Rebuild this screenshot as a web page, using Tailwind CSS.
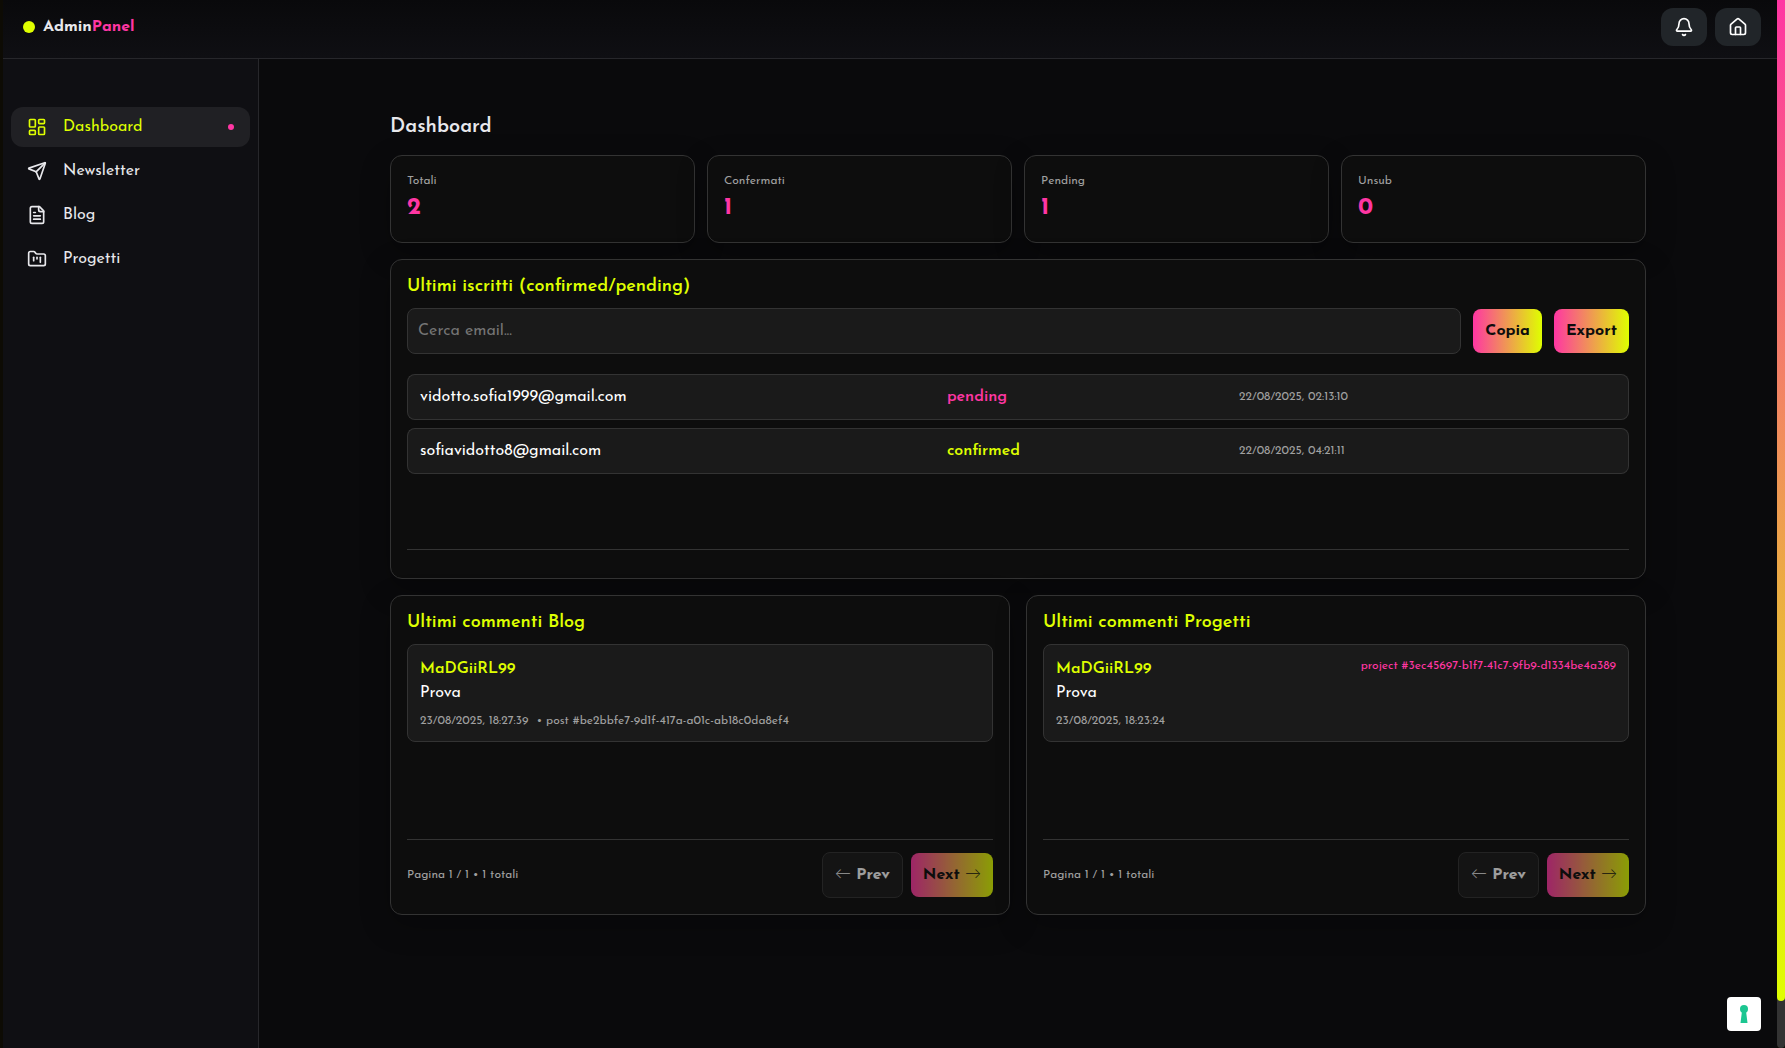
<!DOCTYPE html>
<html lang="it">
<head>
<meta charset="utf-8">
<meta name="viewport" content="width=device-width, initial-scale=1">
<title>AdminPanel</title>
<script src="https://cdn.jsdelivr.net/npm/@tailwindcss/browser@4"></script>
</head>
<body class="flex min-h-screen bg-[#0d0b04] pl-[3px] font-['Josefin_Sans',Lato,sans-serif] text-base text-[#e8e8ec]">
<div class="flex min-w-0 flex-1 flex-col bg-[#0a0a0c]">
  <header class="flex items-center justify-between border-b border-[#27272b] bg-linear-to-b from-[#09090b] to-[#0f0f13] pt-2 pr-4 pb-3 pl-5">
    <a href="#" class="flex items-center gap-2 font-bold leading-6">
      <span class="size-3 rounded-full bg-[#dfff00]"></span>
      <span>Admin<span class="text-[#ff36a3]">Panel</span></span>
    </a>
    <div class="flex gap-2">
      <button type="button" aria-label="Notifiche" class="flex h-[38px] w-[46px] items-center justify-center rounded-xl bg-[#212529] text-white">
        <svg class="size-5" viewBox="0 0 24 24" fill="none" stroke="currentColor" stroke-width="2" stroke-linecap="round" stroke-linejoin="round"><path d="M10.268 21a2 2 0 0 0 3.464 0"/><path d="M3.262 15.326A1 1 0 0 0 4 17h16a1 1 0 0 0 .74-1.673C19.41 13.956 18 12.499 18 8A6 6 0 0 0 6 8c0 4.499-1.411 5.956-2.738 7.326"/></svg>
      </button>
      <button type="button" aria-label="Home" class="flex h-[38px] w-[46px] items-center justify-center rounded-xl bg-[#212529] text-white">
        <svg class="size-5" viewBox="0 0 24 24" fill="none" stroke="currentColor" stroke-width="2" stroke-linecap="round" stroke-linejoin="round"><path d="M15 21v-8a1 1 0 0 0-1-1h-4a1 1 0 0 0-1 1v8"/><path d="M3 10a2 2 0 0 1 .709-1.528l7-5.999a2 2 0 0 1 2.582 0l7 5.999A2 2 0 0 1 21 10v9a2 2 0 0 1-2 2H5a2 2 0 0 1-2-2z"/></svg>
      </button>
    </div>
  </header>

  <div class="flex flex-1">
    <nav class="flex w-64 shrink-0 flex-col gap-1 border-r border-[#27272b] bg-[#0f0f13] px-2 pt-12">
      <a href="#" class="flex h-10 items-center gap-4 rounded-xl bg-[#202024] px-4 text-[#dfff00]">
        <svg class="size-5" viewBox="0 0 24 24" fill="none" stroke="currentColor" stroke-width="2" stroke-linecap="round" stroke-linejoin="round"><rect width="7" height="9" x="3" y="3" rx="1"/><rect width="7" height="5" x="14" y="3" rx="1"/><rect width="7" height="9" x="14" y="12" rx="1"/><rect width="7" height="5" x="3" y="16" rx="1"/></svg>
        <span class="flex-1">Dashboard</span>
        <span class="size-1.5 rounded-full bg-[#ff36a3]"></span>
      </a>
      <a href="#" class="flex h-10 items-center gap-4 rounded-xl px-4">
        <svg class="size-5" viewBox="0 0 24 24" fill="none" stroke="currentColor" stroke-width="2" stroke-linecap="round" stroke-linejoin="round"><path d="M14.536 21.686a.5.5 0 0 0 .937-.024l6.5-19a.496.496 0 0 0-.635-.635l-19 6.5a.5.5 0 0 0-.024.937l7.93 3.18a2 2 0 0 1 1.112 1.11z"/><path d="m21.854 2.147-10.94 10.939"/></svg>
        <span>Newsletter</span>
      </a>
      <a href="#" class="flex h-10 items-center gap-4 rounded-xl px-4">
        <svg class="size-5" viewBox="0 0 24 24" fill="none" stroke="currentColor" stroke-width="2" stroke-linecap="round" stroke-linejoin="round"><path d="M15 2H6a2 2 0 0 0-2 2v16a2 2 0 0 0 2 2h12a2 2 0 0 0 2-2V7Z"/><path d="M14 2v4a2 2 0 0 0 2 2h4"/><path d="M10 9H8"/><path d="M16 13H8"/><path d="M16 17H8"/></svg>
        <span>Blog</span>
      </a>
      <a href="#" class="flex h-10 items-center gap-4 rounded-xl px-4">
        <svg class="size-5" viewBox="0 0 24 24" fill="none" stroke="currentColor" stroke-width="2" stroke-linecap="round" stroke-linejoin="round"><path d="M4 20h16a2 2 0 0 0 2-2V8a2 2 0 0 0-2-2h-7.930a2 2 0 0 1-1.660-.900l-.820-1.200A2 2 0 0 0 7.930 3H4a2 2 0 0 0-2 2v13c0 1.100.900 2 2 2Z"/><path d="M8 10v4"/><path d="M12 10v2"/><path d="M16 10v6"/></svg>
        <span>Progetti</span>
      </a>
    </nav>

    <main class="min-w-0 flex-1 px-3 pt-12 pb-12">
      <div class="mx-auto flex max-w-[1256px] flex-col gap-4">
        <section>
          <h1 class="pt-1 pb-3 text-xl leading-8 font-semibold">Dashboard</h1>
          <dl class="grid grid-cols-4 gap-3">
            <div class="h-[88px] rounded-xl border border-[#333333] bg-[#0d0d0d] px-4 pt-4 shadow-[0_10px_30px_rgba(0,0,0,0.25)]">
              <dt class="text-xs leading-[18px] text-[#a0a0a0]">Totali</dt>
              <dd class="pt-1 text-2xl leading-7 font-bold text-[#ff36a3]">2</dd>
            </div>
            <div class="h-[88px] rounded-xl border border-[#333333] bg-[#0d0d0d] px-4 pt-4 shadow-[0_10px_30px_rgba(0,0,0,0.25)]">
              <dt class="text-xs leading-[18px] text-[#a0a0a0]">Confermati</dt>
              <dd class="pt-1 text-2xl leading-7 font-bold text-[#ff36a3]">1</dd>
            </div>
            <div class="h-[88px] rounded-xl border border-[#333333] bg-[#0d0d0d] px-4 pt-4 shadow-[0_10px_30px_rgba(0,0,0,0.25)]">
              <dt class="text-xs leading-[18px] text-[#a0a0a0]">Pending</dt>
              <dd class="pt-1 text-2xl leading-7 font-bold text-[#ff36a3]">1</dd>
            </div>
            <div class="h-[88px] rounded-xl border border-[#333333] bg-[#0d0d0d] px-4 pt-4 shadow-[0_10px_30px_rgba(0,0,0,0.25)]">
              <dt class="text-xs leading-[18px] text-[#a0a0a0]">Unsub</dt>
              <dd class="pt-1 text-2xl leading-7 font-bold text-[#ff36a3]">0</dd>
            </div>
          </dl>
        </section>

        <section class="flex min-h-80 flex-col rounded-xl border border-[#333333] bg-[#0d0d0d] px-4 pt-4 pb-7 shadow-[0_10px_30px_rgba(0,0,0,0.25)]">
          <h2 class="pb-2.5 text-lg leading-[22px] font-semibold text-[#dfff00]">Ultimi iscritti (confirmed/pending)</h2>
          <div class="flex items-center gap-3">
            <input type="search" aria-label="Cerca email" placeholder="Cerca email..." class="h-[46px] min-w-0 flex-1 rounded-lg border border-[#333333] bg-[#1a1a1a] px-2.5 placeholder:text-[#757575]">
            <button type="button" class="h-11 rounded-lg bg-linear-to-r/srgb from-[#ff36a3] to-[#dfff00] px-3 font-bold text-[#0d0d0d]">Copia</button>
            <button type="button" class="h-11 rounded-lg bg-linear-to-r/srgb from-[#ff36a3] to-[#dfff00] px-3 font-bold text-[#0d0d0d]">Export</button>
          </div>
          <table class="mt-3 w-full table-fixed border-separate border-spacing-x-0 border-spacing-y-2 text-left">
            <tbody>
              <tr class="h-[46px]">
                <td class="w-[43.2%] rounded-l-lg border-y border-l border-[#333333] bg-[#1a1a1a] pl-3 text-white">vidotto.sofia1999@gmail.com</td>
                <td class="w-[23.9%] border-y border-[#333333] bg-[#1a1a1a] pl-3 font-semibold text-[#ff36a3]">pending</td>
                <td class="rounded-r-lg border-y border-r border-[#333333] bg-[#1a1a1a] pl-3 text-xs text-[#a0a0a0]">22/08/2025, 02:13:10</td>
              </tr>
              <tr class="h-[46px]">
                <td class="rounded-l-lg border-y border-l border-[#333333] bg-[#1a1a1a] pl-3 text-white">sofiavidotto8@gmail.com</td>
                <td class="border-y border-[#333333] bg-[#1a1a1a] pl-3 font-semibold text-[#dfff00]">confirmed</td>
                <td class="rounded-r-lg border-y border-r border-[#333333] bg-[#1a1a1a] pl-3 text-xs text-[#a0a0a0]">22/08/2025, 04:21:11</td>
              </tr>
            </tbody>
          </table>
          <hr class="mt-auto border-[#333333]">
        </section>

        <div class="grid grid-cols-2 gap-4">
          <section class="flex min-h-80 flex-col rounded-xl border border-[#333333] bg-[#0d0d0d] px-4 pt-4 pb-4 shadow-[0_10px_30px_rgba(0,0,0,0.25)]">
            <h2 class="pb-2.5 text-lg leading-[22px] font-semibold text-[#dfff00]">Ultimi commenti Blog</h2>
            <article class="h-[98px] rounded-lg border border-[#333333] bg-[#1a1a1a] px-3 pt-3">
              <h3 class="leading-6 font-semibold text-[#dfff00]">MaDGiiRL99</h3>
              <p class="leading-6 text-white">Prova</p>
              <p class="flex gap-2 pt-1 text-xs leading-6 text-[#a0a0a0]"><time>23/08/2025, 18:27:39</time><span>• post #be2bbfe7-9d1f-417a-a01c-ab18c0da8ef4</span></p>
            </article>
            <footer class="mt-auto flex items-center justify-between border-t border-[#333333] pt-3">
              <p class="text-xs text-[#a0a0a0]">Pagina 1 / 1 • 1 totali</p>
              <div class="flex items-center gap-2">
                <button type="button" disabled class="h-[46px] rounded-lg border border-[#333333] bg-[#1a1a1a] px-3 font-bold text-white opacity-60"><span class="font-light">←</span> Prev</button>
                <button type="button" disabled class="h-11 rounded-lg bg-linear-to-r/srgb from-[#ff36a3] to-[#dfff00] px-3 font-bold text-[#0d0d0d] opacity-60">Next <span class="font-light">→</span></button>
              </div>
            </footer>
          </section>
          <section class="flex min-h-80 flex-col rounded-xl border border-[#333333] bg-[#0d0d0d] px-4 pt-4 pb-4 shadow-[0_10px_30px_rgba(0,0,0,0.25)]">
            <h2 class="pb-2.5 text-lg leading-[22px] font-semibold text-[#dfff00]">Ultimi commenti Progetti</h2>
            <article class="h-[98px] rounded-lg border border-[#333333] bg-[#1a1a1a] px-3 pt-3">
              <div class="flex items-start justify-between">
                <h3 class="leading-6 font-semibold text-[#dfff00]">MaDGiiRL99</h3>
                <span class="text-xs leading-[18px] text-[#ff36a3]">project #3ec45697-b1f7-41c7-9fb9-d1334be4a389</span>
              </div>
              <p class="leading-6 text-white">Prova</p>
              <p class="pt-1 text-xs leading-6 text-[#a0a0a0]"><time>23/08/2025, 18:23:24</time></p>
            </article>
            <footer class="mt-auto flex items-center justify-between border-t border-[#333333] pt-3">
              <p class="text-xs text-[#a0a0a0]">Pagina 1 / 1 • 1 totali</p>
              <div class="flex items-center gap-2">
                <button type="button" disabled class="h-[46px] rounded-lg border border-[#333333] bg-[#1a1a1a] px-3 font-bold text-white opacity-60"><span class="font-light">←</span> Prev</button>
                <button type="button" disabled class="h-11 rounded-lg bg-linear-to-r/srgb from-[#ff36a3] to-[#dfff00] px-3 font-bold text-[#0d0d0d] opacity-60">Next <span class="font-light">→</span></button>
              </div>
            </footer>
          </section>
        </div>
      </div>
    </main>
  </div>
</div>

<!-- Page scrollbar -->
<div class="flex w-2 shrink-0 flex-col rounded-b bg-[#333333]" aria-hidden="true">
  <div class="h-[95.5%] rounded-b bg-linear-to-b/srgb from-[#ff36a3] to-[#dfff00]"></div>
</div>

<button type="button" aria-label="Preferenze privacy" class="fixed right-6 bottom-[17px] flex size-[34px] items-center justify-center rounded bg-white">
  <svg class="h-[18px] w-2" viewBox="0 0 8 18" fill="#1cc691"><circle cx="4" cy="4" r="4"/><path d="M2 6h4l1.500 12h-7z"/></svg>
</button>
</body>
</html>
